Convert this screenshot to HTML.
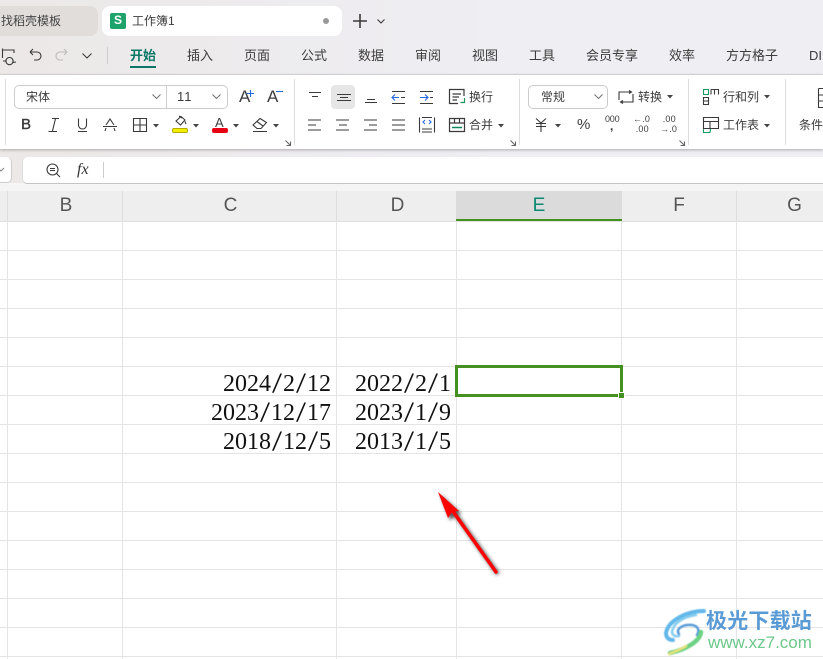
<!DOCTYPE html>
<html lang="zh"><head><meta charset="utf-8"><title>工作簿1</title>
<style>
html,body{margin:0;padding:0}
body{width:823px;height:659px;overflow:hidden;position:relative;background:#fff;font-family:"Liberation Sans","Noto Sans CJK SC",sans-serif;color:#333}
.a{position:absolute}
.t{position:absolute;white-space:nowrap;font-size:13px;line-height:18px;color:#3c3c3c}
.s{font-size:12px}
.gv{position:absolute;top:221px;bottom:0;width:1px;background:#e4e4e4}
.gh{position:absolute;left:0;right:0;height:1px;background:#e4e4e4}
.h{position:absolute;top:191px;height:28px;line-height:29px;text-align:center;font-size:19px;color:#555}
.d{position:absolute;right:0;font:24px/28px "Liberation Serif",serif;color:#111;white-space:nowrap}
.d i{display:inline-block;width:12px;text-align:center;font-style:normal;transform:scale(1.5,1.2)}
svg{position:absolute;overflow:visible}
svg.i{fill:none;stroke:#3a3a3a;stroke-width:1.1}
</style></head><body>

<!-- chrome background -->
<div class="a" style="left:0;top:0;width:823px;height:191px;background:linear-gradient(90deg,#ece8e7,#eeeef3 60%)"></div>
<div class="a" style="left:0;top:74px;width:823px;height:1px;background:#d8d8d8"></div>
<div class="a" style="left:0;top:75px;width:823px;height:74px;background:#fff;box-shadow:0 1px 3px rgba(0,0,0,.28)"></div>
<div class="a" style="left:0;top:183px;width:823px;height:8px;background:#f5f5f5"></div>

<!-- tabs -->
<div class="a" style="left:-10px;top:6px;width:108px;height:30px;background:#e0dddb;border-radius:8px"></div>
<div class="t s" style="left:1px;top:12px;color:#444">找稻壳模板</div>
<div class="a" style="left:102px;top:6px;width:240px;height:30px;background:#fff;border-radius:8px"></div>
<div class="a" style="left:110px;top:13px;width:16px;height:16px;background:#1ea36c;border-radius:2px;color:#fff;font:bold 12px/15px 'Liberation Sans',sans-serif;text-align:center">S</div>
<div class="t s" style="left:132px;top:12px">工作簿1</div>
<div class="a" style="left:323px;top:18px;width:6px;height:6px;border-radius:50%;background:#999"></div>
<svg class="i" style="left:353px;top:14px;stroke-width:1.6" width="14" height="14"><path d="M0 7H14M7 0V14"/></svg>
<svg class="i" style="left:377px;top:19px" width="8" height="5"><path d="M.5 .5L4 4L7.5 .5"/></svg>

<!-- quick access -->
<svg class="i" style="left:2px;top:47px" width="16" height="16"><path d="M.5 11V3H12V6M.5 3V1.5M4 14H1M7.500 10.500a3.600 3.600 0 1 0 .01 0M11 15.500l3-.5"/></svg>
<svg class="i" style="left:29px;top:48px" width="13" height="14"><path d="M1 4L4 1M1 4L4 7M1 4H8a3.800 3.800 0 0 1 0 8H5"/></svg>
<svg class="i" style="left:55px;top:48px;stroke:#bbb" width="13" height="14"><path d="M12 4L9 1M12 4L9 7M12 4H5a3.800 3.800 0 0 0 0 8H8"/></svg>
<svg class="i" style="left:82px;top:53px" width="10" height="6"><path d="M.5 .5L5 5L9.500 .5"/></svg>
<div class="a" style="left:107px;top:47px;width:1px;height:17px;background:#ccc"></div>

<!-- menu -->
<div class="t" style="left:130px;top:47px;color:#0c7767;font-weight:bold">开始</div>
<div class="a" style="left:130px;top:66px;width:26px;height:2px;background:#0c7767"></div>
<div class="t" style="left:187px;top:47px">插入</div>
<div class="t" style="left:244px;top:47px">页面</div>
<div class="t" style="left:301px;top:47px">公式</div>
<div class="t" style="left:358px;top:47px">数据</div>
<div class="t" style="left:415px;top:47px">审阅</div>
<div class="t" style="left:472px;top:47px">视图</div>
<div class="t" style="left:529px;top:47px">工具</div>
<div class="t" style="left:586px;top:47px">会员专享</div>
<div class="t" style="left:669px;top:47px">效率</div>
<div class="t" style="left:726px;top:47px">方方格子</div>
<div class="t" style="left:809px;top:47px">DI</div>

<!-- ribbon separators -->
<div class="a" style="left:5px;top:79px;width:1px;height:66px;background:#ddd"></div>
<div class="a" style="left:294px;top:79px;width:1px;height:66px;background:#ddd"></div>
<div class="a" style="left:519px;top:79px;width:1px;height:66px;background:#ddd"></div>
<div class="a" style="left:688px;top:79px;width:1px;height:66px;background:#ddd"></div>
<div class="a" style="left:785px;top:79px;width:1px;height:66px;background:#ddd"></div>

<!-- font group -->
<div class="a" style="left:14px;top:85px;width:212px;height:22px;border:1px solid #ccc;border-radius:5px"></div>
<div class="a" style="left:166px;top:85px;width:1px;height:24px;background:#ccc"></div>
<div class="t s" style="left:26px;top:88px">宋体</div>
<div class="t" style="left:177px;top:88px;letter-spacing:1px">11</div>
<svg class="i" style="left:152px;top:94px;stroke:#777" width="9" height="5"><path d="M.5 .5L4.500 4.500L8.500 .5"/></svg>
<svg class="i" style="left:212px;top:94px;stroke:#777" width="9" height="5"><path d="M.5 .5L4.500 4.500L8.500 .5"/></svg>
<div class="t" style="left:239px;top:88px;font-size:17px">A</div>
<svg class="i" style="left:247px;top:90px;stroke:#2468e0" width="7" height="7"><path d="M0 3.500H7M3.500 0V7"/></svg>
<div class="t" style="left:267px;top:88px;font-size:17px">A</div>
<svg class="i" style="left:276px;top:91px;stroke:#2468e0" width="7" height="2"><path d="M0 .5H7"/></svg>

<div class="t" style="left:21px;top:116px;font-size:15px;-webkit-text-stroke:.4px #3c3c3c">B</div>
<svg class="i" style="left:48px;top:118px" width="12" height="15"><path d="M4 .5H11M7.500 .5L4.500 13M.5 13.500H9"/></svg>
<svg class="i" style="left:77px;top:118px" width="11" height="15"><path d="M1.500 .5V7a4 4 0 0 0 8 0V.5M1 13.500H10"/></svg>
<svg class="i" style="left:103px;top:118px" width="14" height="15"><path d="M3 7L7 1L11 7M3 10L2 13M11 10L12 13M0 8.500H14"/></svg>
<svg class="i" style="left:133px;top:118px" width="14" height="14"><path d="M.5 .5H13.500V13.500H.5ZM7 .5V13.500M.5 7H13.500"/></svg>
<svg class="a" style="left:153px;top:124px" width="6" height="4"><path d="M0 0H6L3 3.500Z" fill="#444"/></svg>
<svg class="i" style="left:174px;top:115px" width="14" height="12"><path d="M2 6L7 1.500L11 5L6.500 10L2 6ZM5 1L8 3M11 6.500l1 2.500"/></svg>
<div class="a" style="left:172px;top:128px;width:14px;height:3px;background:#f2ee00;border:1px solid #b5a900;border-radius:2px"></div>
<svg class="a" style="left:193px;top:124px" width="6" height="4"><path d="M0 0H6L3 3.500Z" fill="#444"/></svg>
<div class="t" style="left:215px;top:114px;font-size:13px">A</div>
<div class="a" style="left:212px;top:128px;width:16px;height:5px;background:#e60012;border-radius:2px"></div>
<svg class="a" style="left:233px;top:124px" width="6" height="4"><path d="M0 0H6L3 3.500Z" fill="#444"/></svg>
<svg class="i" style="left:252px;top:117px" width="16" height="15"><path d="M1 8L8 1.500L14.500 5.500L9 11.500H5L1 8ZM5 4.500L11 9M1 14.500H15"/></svg>
<svg class="a" style="left:273px;top:124px" width="6" height="4"><path d="M0 0H6L3 3.500Z" fill="#444"/></svg>
<svg class="i" style="left:285px;top:140px;stroke:#666" width="6" height="6"><path d="M.5 .5L5.500 5.500M5.500 1.500V5.500H1.500"/></svg>

<!-- align group -->
<div class="a" style="left:331px;top:85px;width:24px;height:24px;background:#e6e6e6;border-radius:4px"></div>
<svg class="i" style="left:307px;top:90px" width="136" height="15">
<path d="M2 2.500H14M5 6.500H11"/>
<path d="M30 4.500H44M33 7.500H41M30 10.500H44"/>
<path d="M60 9.500H68M58 12.500H70"/>
<path d="M85 1.500H98M94 7.500H98M85 13.500H98"/>
<path d="M113 1.500H126M123 7.500H126M113 13.500H126"/>
</svg>
<svg class="i" style="left:391px;top:93px;stroke:#2468e0" width="48" height="9"><path d="M8 4.500H1M4 1.500L1 4.500L4 7.500"/><path d="M29 4.500H37M34 1.500L37 4.500L34 7.500"/></svg>
<svg class="i" style="left:449px;top:89px;stroke-width:1.2" width="17" height="16"><path d="M15 7V.5H.5V14.500H9M3.500 5H12M3.500 8H10M3.500 11H8"/><path d="M15.500 9V13.500H11.500" stroke="#1a9a5c"/></svg>
<div class="t s" style="left:469px;top:88px">换行</div>
<svg class="i" style="left:307px;top:119px" width="110" height="13"><path d="M1 1H14M1 6H9M1 11H14"/><path d="M29 1H42M32 6H40M29 11H42"/><path d="M57 1H70M62 6H70M57 11H70"/><path d="M85 1H98M85 6H98M85 11H98"/></svg>
<svg class="i" style="left:419px;top:117px" width="16" height="16"><path d="M.5 .5V15.500M15.500 .5V15.500M3 12H13M3 15H13M3 .5H13"/><path d="M6 3L4 5L6 7M10 3L12 5L10 7" stroke="#2468e0"/></svg>
<svg class="i" style="left:449px;top:118px;stroke-width:1.2" width="16" height="14"><path d="M.5 .5H15.500V13.500H.5ZM.5 5H15.500M5.500 .5V5M10.500 .5V5"/><path d="M3 9.500H13" stroke="#0d8a5c" stroke-width="1.500"/></svg>
<div class="t s" style="left:469px;top:116px">合并</div>
<svg class="a" style="left:498px;top:124px" width="6" height="4"><path d="M0 0H6L3 3.500Z" fill="#444"/></svg>
<svg class="i" style="left:510px;top:140px;stroke:#666" width="6" height="6"><path d="M.5 .5L5.500 5.500M5.500 1.500V5.500H1.500"/></svg>

<!-- number group -->
<div class="a" style="left:528px;top:85px;width:78px;height:22px;border:1px solid #ccc;border-radius:5px"></div>
<div class="t s" style="left:541px;top:88px">常规</div>
<svg class="i" style="left:594px;top:94px;stroke:#777" width="9" height="5"><path d="M.5 .5L4.500 4.500L8.500 .5"/></svg>
<svg class="i" style="left:618px;top:90px" width="16" height="14"><path d="M1 10V2H13M11 .5L13.500 2L11 3.500M15 4V12H3M5 10.500L2.500 12L5 13.500"/></svg>
<div class="t s" style="left:638px;top:88px">转换</div>
<svg class="a" style="left:667px;top:95px" width="6" height="4"><path d="M0 0H6L3 3.500Z" fill="#444"/></svg>
<svg class="i" style="left:535px;top:118px" width="12" height="14"><path d="M1 .5L6 5L11 .5M1 5.500H11M1 8.500H11M6 5V14"/></svg>
<svg class="a" style="left:555px;top:124px" width="6" height="4"><path d="M0 0H6L3 3.500Z" fill="#444"/></svg>
<div class="t" style="left:577px;top:116px;font-size:15px">%</div>
<div class="t" style="left:605px;top:113px;font-size:9px;line-height:12px;letter-spacing:-.2px">000</div>
<div class="t" style="left:610px;top:120px;font-size:12px;line-height:12px;font-weight:bold">,</div>
<div class="t" style="left:633px;top:114px;font-size:9px;line-height:10px;letter-spacing:.2px">&#8592;.0<br>&nbsp;.00</div>
<div class="t" style="left:660px;top:114px;font-size:9px;line-height:10px;letter-spacing:.2px">&nbsp;.00<br>&#8594;.0</div>
<svg class="i" style="left:679px;top:140px;stroke:#666" width="6" height="6"><path d="M.5 .5L5.500 5.500M5.500 1.500V5.500H1.500"/></svg>

<!-- rows group -->
<svg class="i" style="left:703px;top:89px" width="16" height="16"><rect x=".5" y=".5" width="5" height="5" stroke="#1a9a5c"/><path d="M8 .5H15.500V5.500M8 .5V5.500M11.500 .5V5.500M.5 8.500H5.500V15.500H.5ZM.5 12H5.500"/></svg>
<div class="t s" style="left:723px;top:88px">行和列</div>
<svg class="a" style="left:764px;top:95px" width="6" height="4"><path d="M0 0H6L3 3.500Z" fill="#444"/></svg>
<svg class="i" style="left:703px;top:117px" width="16" height="16"><path d="M.5 .5H15.500V11.500H.5ZM.5 4.500H15.500M7 4.500V11.500"/><path d="M.5 12V15.500H7L7.500 12" stroke="#1a9a5c"/></svg>
<div class="t s" style="left:723px;top:116px">工作表</div>
<svg class="a" style="left:764px;top:124px" width="6" height="4"><path d="M0 0H6L3 3.500Z" fill="#444"/></svg>
<svg class="i" style="left:818px;top:88px" width="10" height="20"><path d="M.5 .5V19.500H10M.5 .5H10M.5 7H10M.5 13H10"/></svg>
<div class="t s" style="left:799px;top:116px">条件</div>

<!-- formula bar -->
<div class="a" style="left:-10px;top:157px;width:21px;height:25px;background:#fff;border:1px solid #ccc;border-top:0;border-left:0;border-radius:5px"></div>
<svg class="i" style="left:-2px;top:168px;stroke:#888" width="7" height="4"><path d="M0 0L3 3L6 0"/></svg>
<div class="a" style="left:22px;top:157px;width:810px;height:27px;background:#fff;border-bottom:1px solid #c4c4c4;border-left:1px solid #ddd;border-radius:5px 0 0 5px;box-sizing:border-box"></div>
<svg class="i" style="left:46px;top:163px" width="15" height="15"><circle cx="6.500" cy="6.500" r="5.500"/><path d="M4 5.500H9M4 7.500H9M10.500 10.500L14 14"/></svg>
<div class="t" style="left:77px;top:161px;font:italic 16px/18px 'Liberation Serif',serif;color:#333">fx</div>
<div class="a" style="left:103px;top:162px;width:1px;height:16px;background:#ccc"></div>

<!-- column headers -->
<div class="a" style="left:0;top:191px;width:823px;height:30px;background:#eee"></div>
<div class="a" style="left:0;top:221px;width:823px;height:1px;background:#e0e0e0"></div>
<div class="a" style="left:7px;top:191px;width:1px;height:30px;background:#ddd"></div>
<div class="a" style="left:122px;top:191px;width:1px;height:30px;background:#ddd"></div>
<div class="a" style="left:336px;top:191px;width:1px;height:30px;background:#ddd"></div>
<div class="a" style="left:736px;top:191px;width:1px;height:30px;background:#ddd"></div>
<div class="a" style="left:456px;top:191px;width:166px;height:28px;background:#dbdbdb"></div>
<div class="a" style="left:456px;top:219px;width:166px;height:2px;background:#45911f"></div>
<div class="h" style="left:9px;width:114px">B</div>
<div class="h" style="left:124px;width:213px">C</div>
<div class="h" style="left:338px;width:119px">D</div>
<div class="h" style="left:456px;width:166px;color:#0b8a72">E</div>
<div class="h" style="left:622px;width:114px">F</div>
<div class="h" style="left:737px;width:115px">G</div>

<!-- grid -->
<div class="gv" style="left:7px"></div><div class="gv" style="left:122px"></div><div class="gv" style="left:336px"></div><div class="gv" style="left:456px"></div><div class="gv" style="left:621px"></div><div class="gv" style="left:736px"></div>
<div class="gh" style="top:250px"></div><div class="gh" style="top:279px"></div><div class="gh" style="top:308px"></div><div class="gh" style="top:337px"></div><div class="gh" style="top:366px"></div><div class="gh" style="top:395px"></div><div class="gh" style="top:424px"></div><div class="gh" style="top:453px"></div><div class="gh" style="top:482px"></div><div class="gh" style="top:511px"></div><div class="gh" style="top:540px"></div><div class="gh" style="top:569px"></div><div class="gh" style="top:598px"></div><div class="gh" style="top:627px"></div><div class="gh" style="top:656px"></div>

<!-- data -->
<div class="d" style="left:0;width:331px;top:370px;text-align:right">2024<i>/</i>2<i>/</i>12</div>
<div class="d" style="left:0;width:331px;top:399px;text-align:right">2023<i>/</i>12<i>/</i>17</div>
<div class="d" style="left:0;width:331px;top:428px;text-align:right">2018<i>/</i>12<i>/</i>5</div>
<div class="d" style="left:0;width:451px;top:370px;text-align:right">2022<i>/</i>2<i>/</i>1</div>
<div class="d" style="left:0;width:451px;top:399px;text-align:right">2023<i>/</i>1<i>/</i>9</div>
<div class="d" style="left:0;width:451px;top:428px;text-align:right">2013<i>/</i>1<i>/</i>5</div>

<!-- selection -->
<div class="a" style="left:455px;top:365px;width:168px;height:32px;box-sizing:border-box;border:3px solid #45911f"></div>
<div class="a" style="left:618px;top:392px;width:5px;height:5px;background:#45911f;border:1px solid #fff"></div>

<!-- arrow -->
<svg style="left:0;top:0" width="823" height="659">
<defs><filter id="b" x="-40%" y="-40%" width="180%" height="180%"><feGaussianBlur stdDeviation="1.800"/></filter>
<filter id="c" x="-40%" y="-40%" width="180%" height="180%"><feGaussianBlur stdDeviation=".5"/></filter></defs>
<g transform="translate(2 2)" filter="url(#b)" opacity=".75"><path d="M496 572L452 510" stroke="#222" stroke-width="4"/><path d="M438 492L459 511L448 518Z" fill="#222"/></g>
<path d="M496 572L452 510" stroke="#f00" stroke-width="3.500" stroke-linecap="round"/>
<path d="M438 492L459 511L452 512L448 518Z" fill="#f00"/>
<!-- logo swirl -->
<g fill="none" stroke-linecap="round" filter="url(#c)" transform="translate(662 608)">
<path d="M42 3C24 3 6 13 4 25C4 30 7 32 11 32" stroke="#62b8ea" stroke-width="4"/>
<path d="M34 7C20 9 11 16 10 24C10 27 13 29 17 28" stroke="#86cdf0" stroke-width="2.500"/>
<path d="M17 26C13 21 21 16 30 17C36 18 38 22 35 27" stroke="#5a9bd8" stroke-width="2.500"/>
<path d="M39 24C38 34 22 42 8 45" stroke="#6dd184" stroke-width="4.500"/>
<path d="M24 38C18 42 12 44 7 46" stroke="#e8e27c" stroke-width="2.500"/>
</g>
</svg>

<!-- watermark text -->
<div class="t" style="left:706px;top:608px;font-size:21px;line-height:28px;font-weight:bold;color:#5b9bd5;letter-spacing:.2px">极光下载站</div>
<div class="t" style="left:708px;top:632px;font-size:17px;line-height:22px;color:#6cc78a">www.xz7.com</div>

</body></html>
